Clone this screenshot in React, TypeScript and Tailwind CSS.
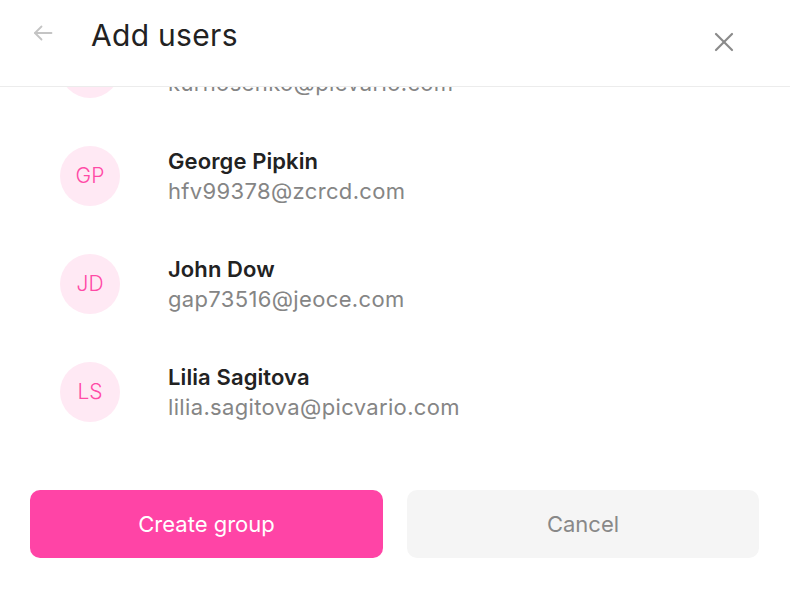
import React from "react";

const users = [
  { initials: "KK", name: "Kirill Kurnosenko", email: "kurnosenko@picvario.com" },
  { initials: "GP", name: "George Pipkin", email: "hfv99378@zcrcd.com" },
  { initials: "JD", name: "John Dow", email: "gap73516@jeoce.com" },
  { initials: "LS", name: "Lilia Sagitova", email: "lilia.sagitova@picvario.com" },
];

export default function App() {
  return (
    <div
      className="w-[790px] h-[591px] bg-white flex flex-col overflow-hidden"
      style={{ fontFamily: "Inter, 'Noto Sans', sans-serif" }}
    >
      <div className="h-[87px] shrink-0 border-b border-[#ececec] flex items-start relative">
        <button className="absolute left-[33px] top-[23px] w-[20px] h-[20px] flex items-center justify-center text-[#c4c4c4]">
          <svg width="20" height="20" viewBox="0 0 20 20" fill="none" stroke="currentColor" strokeWidth="1.8" strokeLinecap="round" strokeLinejoin="round">
            <path d="M18.5 10H2" />
            <path d="M8.5 3.5L2 10L8.5 16.5" />
          </svg>
        </button>
        <h1 className="ml-[91px] mt-[15px] text-[30px] leading-[40px] font-normal text-[#222222] tracking-[0.3px]">
          Add users
        </h1>
        <button className="absolute left-[713px] top-[31px] w-[22px] h-[22px] flex items-center justify-center text-[#8a8a8a]">
          <svg width="22" height="22" viewBox="0 0 22 22" fill="none" stroke="currentColor" strokeWidth="2.2" strokeLinecap="round">
            <path d="M3 3L19 19" />
            <path d="M19 3L3 19" />
          </svg>
        </button>
      </div>
      <div className="h-[379px] shrink-0 overflow-hidden">
        <div className="mt-[-73px] flex flex-col">
          {users.map((u) => (
            <div key={u.email} className="h-[108px] flex items-center pl-[60px] gap-[48px]">
              <div className="w-[60px] h-[60px] rounded-full bg-[#ffe9f4] flex items-center justify-center text-[#ff4aa6] text-[21px] font-light">
                {u.initials}
              </div>
              <div className="flex flex-col">
                <div className="text-[22px] leading-[30px] font-semibold text-[#222222] tracking-[0.1px]">{u.name}</div>
                <div className="text-[22px] leading-[30px] font-normal text-[#858585] tracking-[0.35px]">{u.email}</div>
              </div>
            </div>
          ))}
        </div>
      </div>
      <div className="pt-[24px] px-[30px] flex gap-[24px]">
        <button className="w-[353px] h-[68px] rounded-[10px] bg-[#ff44a6] text-white text-[22px] font-normal">
          Create group
        </button>
        <button className="w-[352px] h-[68px] rounded-[10px] bg-[#f5f5f5] text-[#888888] text-[22px] font-normal">
          Cancel
        </button>
      </div>
    </div>
  );
}
